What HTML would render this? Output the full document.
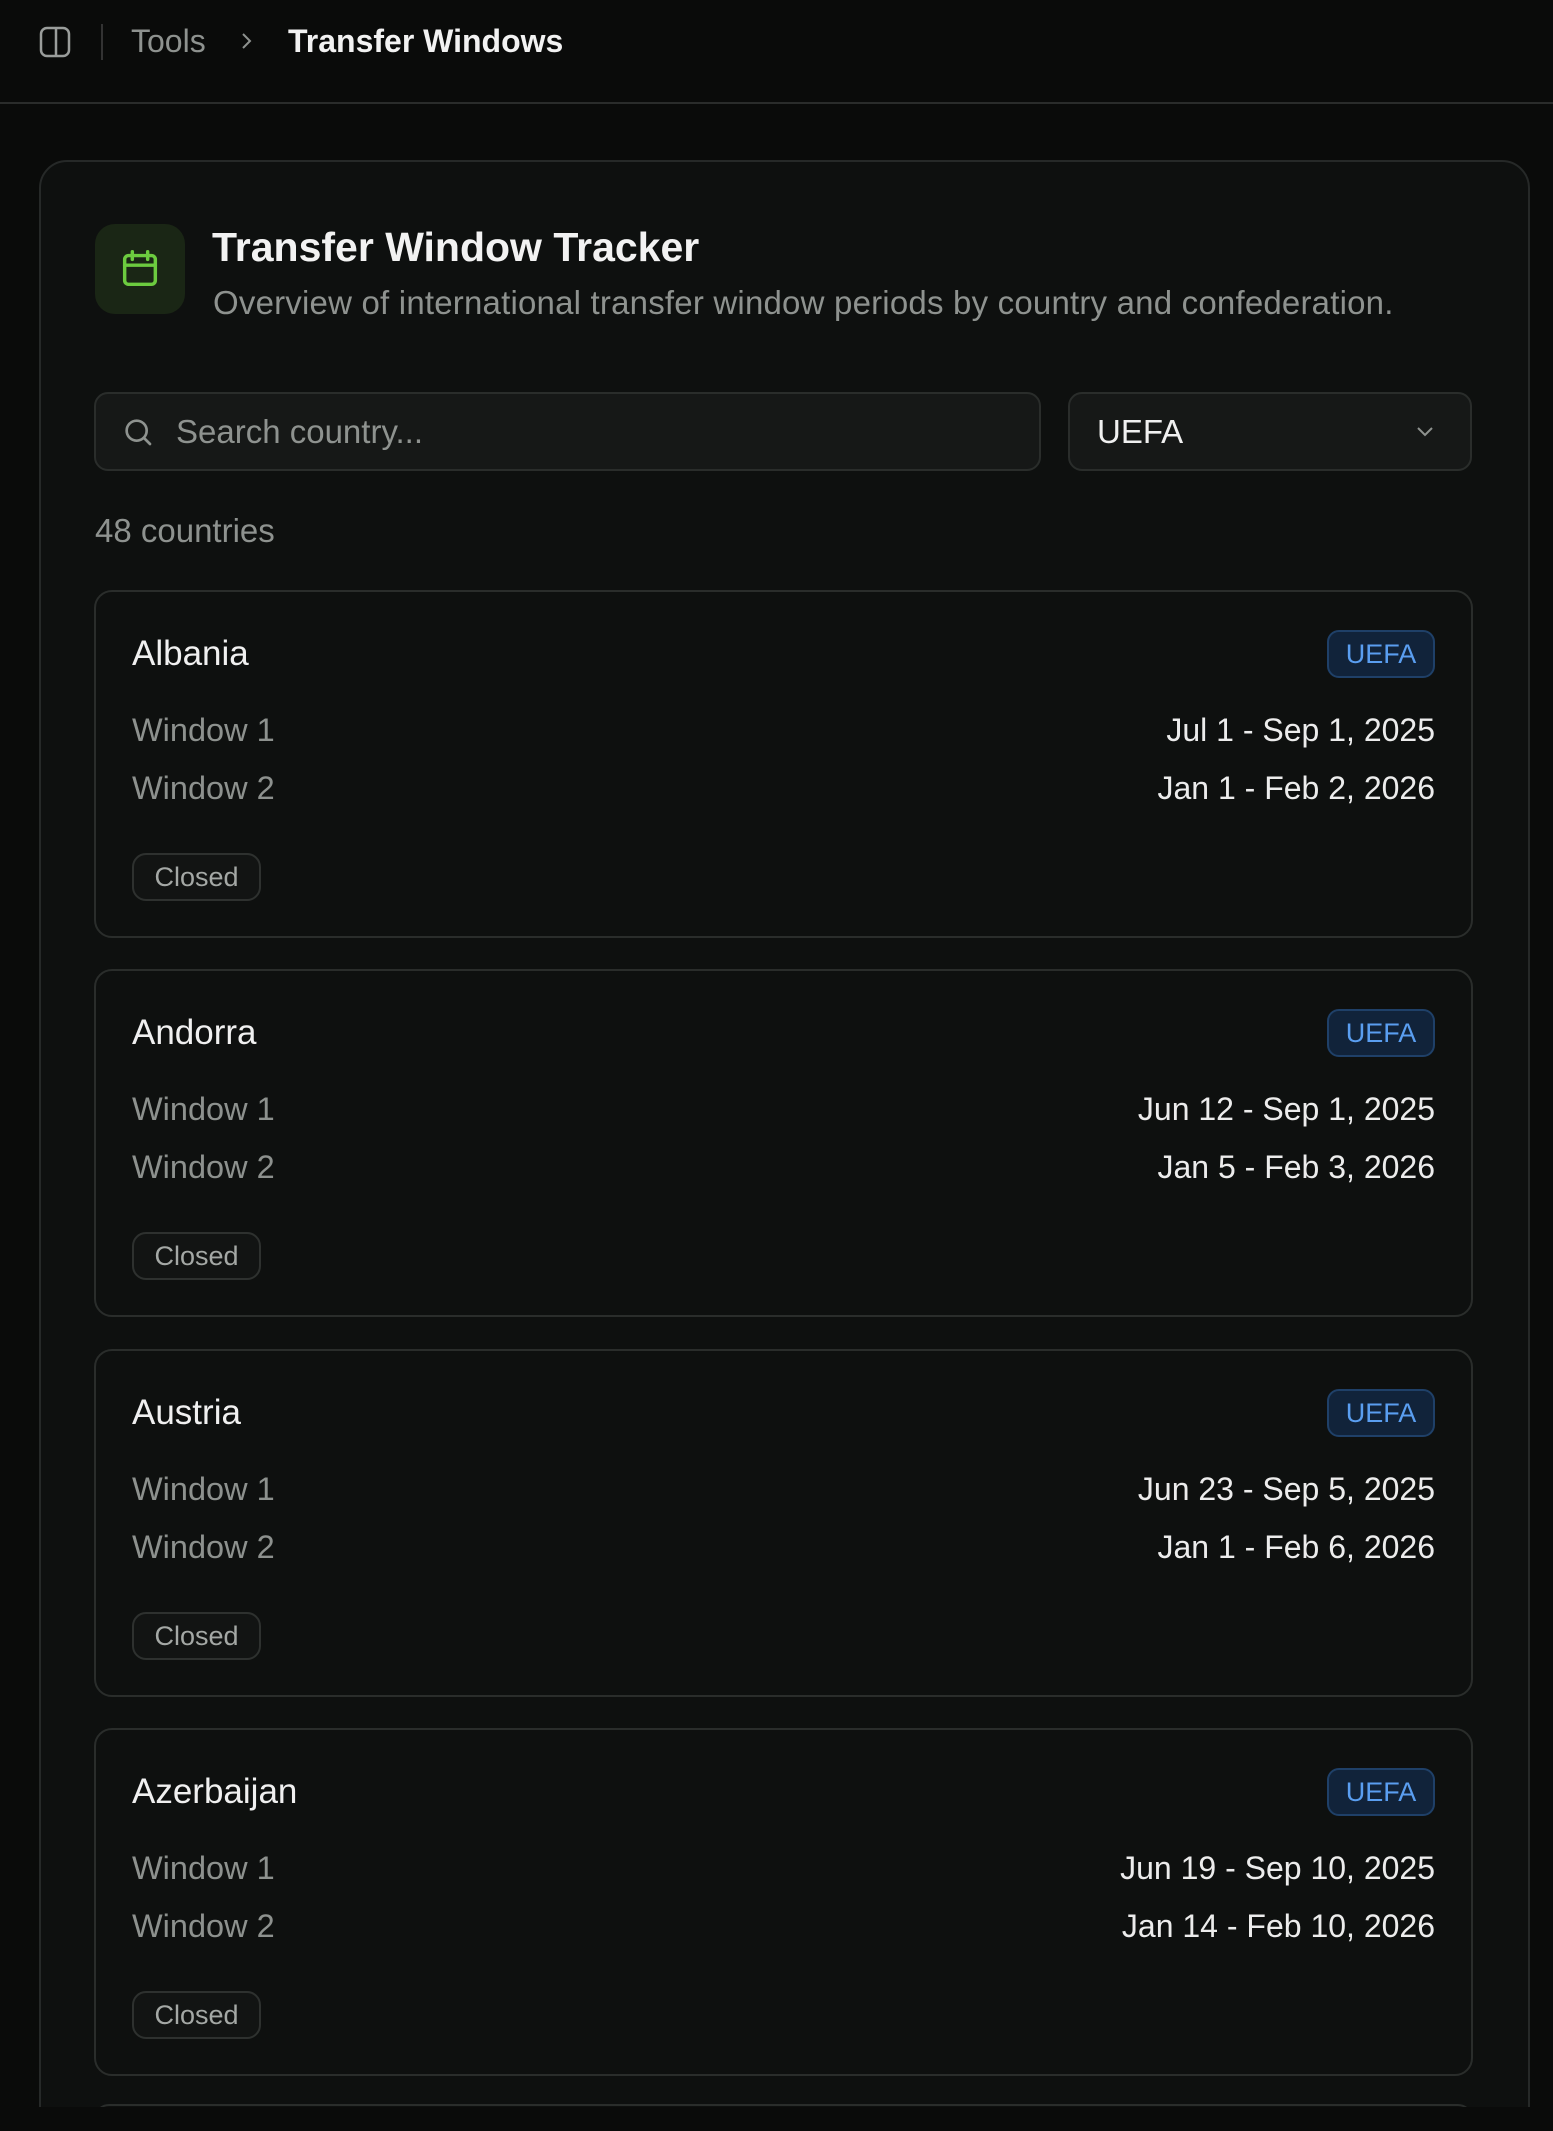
<!DOCTYPE html>
<html><head><meta charset="utf-8"><style>
*{box-sizing:border-box;margin:0;padding:0}
html,body{width:1553px;height:2131px;background:#0a0b0a;overflow:hidden;font-family:"Liberation Sans",sans-serif;color:#ececec}
.a{position:absolute}
.hdr{left:0;top:0;width:1553px;height:104px;border-bottom:2px solid #2a2c2b;background:#0a0b0a}
.clip{left:0;top:104px;width:1553px;height:2003px;overflow:hidden}
.outer{position:absolute;left:39px;top:56px;width:1491px;height:1980px;border:2px solid #262928;border-radius:28px;background:#0e100f;overflow:hidden}
.card{position:absolute;left:53px;width:1379px;height:348px;border:2px solid #2a2d2b;border-radius:18px;background:#0e100f}
.name{position:absolute;left:36px;top:42px;font-size:35px;color:#f0f0f0}
.badge{position:absolute;right:36px;top:38px;width:108px;height:48px;border:2px solid #1f4068;background:#11233a;border-radius:12px;color:#5a9ef0;font-size:27px;line-height:44px;text-align:center}
.lab{position:absolute;left:36px;font-size:32.5px;color:#8d918e}
.val{position:absolute;right:36px;font-size:32px;color:#ececec}
.closed{position:absolute;left:36px;top:261px;width:129px;height:48px;border:2px solid #2e312f;border-radius:14px;background:#121413;color:#a4a8a5;font-size:27px;line-height:44px;text-align:center}
</style></head><body>
<div class="a hdr">
  <svg class="a" style="left:39px;top:26px" width="32" height="32" viewBox="0 0 32 32"><rect x="2" y="2" width="28" height="28" rx="6" fill="none" stroke="#9a9d9b" stroke-width="2.5"/><line x1="17" y1="3" x2="17" y2="29" stroke="#9a9d9b" stroke-width="2.5"/></svg>
  <div class="a" style="left:101px;top:24px;width:2px;height:36px;background:#333"></div>
  <div class="a" style="left:131px;top:23px;font-size:32px;color:#8e928f">Tools</div>
  <svg class="a" style="left:240px;top:31px" width="14" height="20" viewBox="0 0 14 20"><path d="M3 3l7 7-7 7" fill="none" stroke="#8e928f" stroke-width="2"/></svg>
  <div class="a" style="left:288px;top:23px;font-size:32px;font-weight:bold;color:#f2f2f2">Transfer Windows</div>
</div>
<div class="a clip">
 <div class="outer">
  <div class="a" style="left:54px;top:62px;width:90px;height:90px;border-radius:20px;background:#1a2615"></div>
  <svg class="a" style="left:76px;top:84px" width="46" height="46" viewBox="0 0 24 24" fill="none" stroke="#6ccb3f" stroke-width="1.8" stroke-linecap="round"><rect x="4" y="5" width="16" height="15" rx="2"/><line x1="4" y1="10" x2="20" y2="10"/><line x1="8" y1="3" x2="8" y2="7"/><line x1="16" y1="3" x2="16" y2="7"/></svg>
  <div class="a" style="left:171px;top:62px;font-size:41px;font-weight:bold;color:#f2f2f2">Transfer Window Tracker</div>
  <div class="a" style="left:172px;top:122px;font-size:33px;color:#8e928f;white-space:nowrap;letter-spacing:0.2px">Overview of international transfer window periods by country and confederation.</div>
  <div class="a" style="left:53px;top:230px;width:947px;height:79px;border:2px solid #2a2d2b;border-radius:14px;background:#161817">
    <svg class="a" style="left:26px;top:22px" width="32" height="32" viewBox="0 0 24 24" fill="none" stroke="#8e928f" stroke-width="2" stroke-linecap="round"><circle cx="11" cy="11" r="7.5"/><line x1="16.5" y1="16.5" x2="21" y2="21"/></svg>
    <div class="a" style="left:80px;top:19px;font-size:33px;color:#8e928f">Search country...</div>
  </div>
  <div class="a" style="left:1027px;top:230px;width:404px;height:79px;border:2px solid #2a2d2b;border-radius:14px;background:#161817">
    <div class="a" style="left:27px;top:19px;font-size:33px;color:#f0f0f0">UEFA</div>
    <svg class="a" style="left:344px;top:30px" width="22" height="16" viewBox="0 0 22 16"><path d="M4 4l7 7 7-7" fill="none" stroke="#8e928f" stroke-width="2"/></svg>
  </div>
  <div class="a" style="left:54px;top:350px;font-size:33px;color:#8e928f">48 countries</div>

  <div class="card" style="top:428px"><div class="name">Albania</div><div class="badge">UEFA</div>
   <div class="lab" style="top:120px">Window 1</div><div class="val" style="top:120px">Jul 1 - Sep 1, 2025</div>
   <div class="lab" style="top:178px">Window 2</div><div class="val" style="top:178px">Jan 1 - Feb 2, 2026</div><div class="closed">Closed</div></div>
  <div class="card" style="top:807px"><div class="name">Andorra</div><div class="badge">UEFA</div>
   <div class="lab" style="top:120px">Window 1</div><div class="val" style="top:120px">Jun 12 - Sep 1, 2025</div>
   <div class="lab" style="top:178px">Window 2</div><div class="val" style="top:178px">Jan 5 - Feb 3, 2026</div><div class="closed">Closed</div></div>
  <div class="card" style="top:1187px"><div class="name">Austria</div><div class="badge">UEFA</div>
   <div class="lab" style="top:120px">Window 1</div><div class="val" style="top:120px">Jun 23 - Sep 5, 2025</div>
   <div class="lab" style="top:178px">Window 2</div><div class="val" style="top:178px">Jan 1 - Feb 6, 2026</div><div class="closed">Closed</div></div>
  <div class="card" style="top:1566px"><div class="name">Azerbaijan</div><div class="badge">UEFA</div>
   <div class="lab" style="top:120px">Window 1</div><div class="val" style="top:120px">Jun 19 - Sep 10, 2025</div>
   <div class="lab" style="top:178px">Window 2</div><div class="val" style="top:178px">Jan 14 - Feb 10, 2026</div><div class="closed">Closed</div></div>
  <div class="card" style="top:1942px;height:30px"></div>
 </div>
</div>
</body></html>
